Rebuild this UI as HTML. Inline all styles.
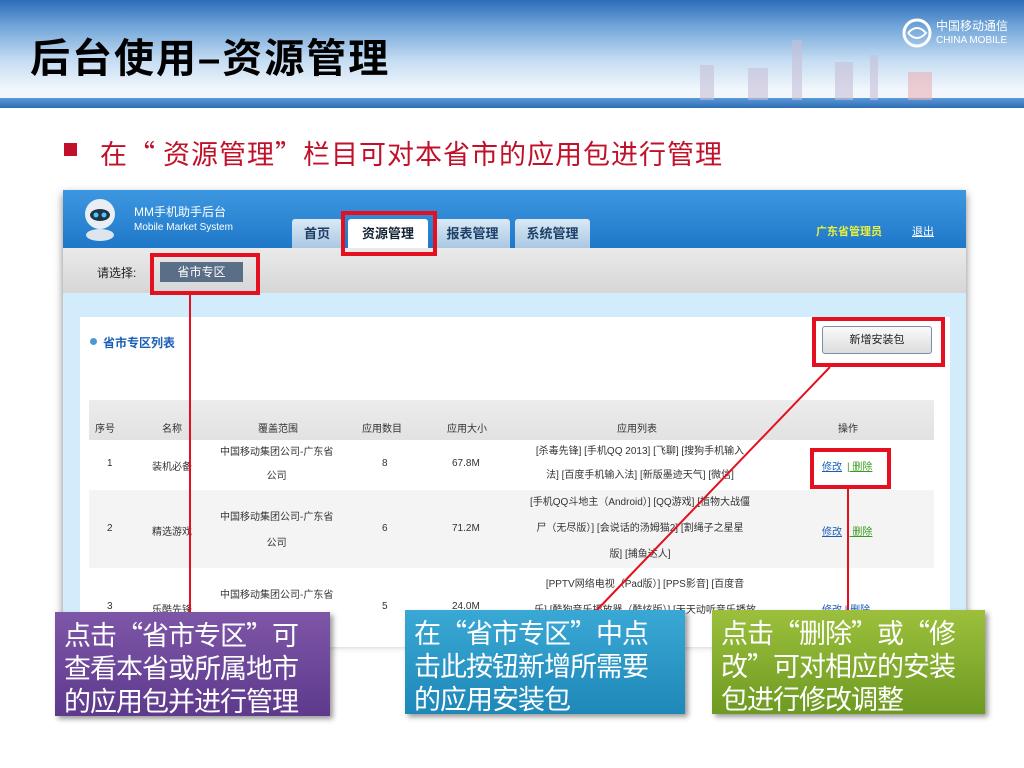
<!DOCTYPE html>
<html><head><meta charset="utf-8"><style>
*{margin:0;padding:0;box-sizing:border-box}
body{width:1024px;height:768px;position:relative;overflow:hidden;background:#fff;font-family:"Liberation Sans","Noto Sans CJK SC",sans-serif}
.a{position:absolute}
.hdr{left:0;top:0;width:1024px;height:100px;background:linear-gradient(180deg,#2d6cb8 0%,#6ea3d8 25%,#c4dcf2 60%,#f2f7fc 90%)}
.band{left:0;top:98px;width:1024px;height:10px;background:linear-gradient(180deg,#5a9ad6,#2f6db5);}
.title{left:30px;top:26px;font-size:40px;font-weight:bold;color:#000;letter-spacing:2px}
.sub{left:100px;top:133px;font-size:27px;color:#c0102a;letter-spacing:1px;font-family:"Noto Sans CJK SC",sans-serif}
.bul{left:64px;top:143px;width:13px;height:13px;background:#c0102a}
.shot{left:63px;top:190px;width:903px;height:450px;background:#fff;box-shadow:0 4px 8px rgba(0,0,0,.5)}
.sb{left:63px;top:190px;width:903px;height:58px;background:linear-gradient(180deg,#3d97e0,#1f78c8)}
.gb{left:63px;top:248px;width:903px;height:45px;background:linear-gradient(180deg,#eaeaea,#d6d6d6)}
.lb{left:63px;top:293px;width:903px;height:350px;background:#d3ecfb}
.wp{left:80px;top:317px;width:870px;height:330px;background:#fff}
.tab{top:219px;height:29px;background:linear-gradient(180deg,#dbe9f5,#a9c8e2);border-radius:3px 3px 0 0;font-size:13px;font-weight:bold;color:#1d3f66;text-align:center;line-height:29px}
.t{font-size:10px;color:#333;position:absolute;text-align:center}
.rb{position:absolute;border:4px solid #e4101f}
.box{position:absolute;color:#fff;font-size:27px;line-height:33px;padding:5px 9px;box-shadow:3px 3px 5px rgba(0,0,0,.4);white-space:nowrap;font-family:"Noto Sans CJK SC",sans-serif;letter-spacing:-1px}
</style></head><body>
<div class="a hdr"></div>
<div class="a band"></div>
<svg class="a" style="left:690px;top:20px" width="334" height="80">
<g fill="#c8c0d8" opacity=".6"><rect x="10" y="45" width="14" height="35"/><rect x="58" y="48" width="20" height="32"/><rect x="102" y="20" width="10" height="60"/><rect x="145" y="42" width="18" height="38"/><rect x="180" y="35" width="8" height="45"/><rect x="218" y="52" width="24" height="28" fill="#e8b0b8"/></g>
</svg>
<svg class="a" style="left:902px;top:18px" width="30" height="30"><circle cx="15" cy="15" r="13" fill="none" stroke="#fff" stroke-width="3"/><path d="M6 15 Q15 5 24 15 Q15 25 6 15" fill="none" stroke="#fff" stroke-width="2"/></svg>
<div class="a" style="left:936px;top:20px;font-size:12px;color:#fff;line-height:13px">中国移动通信<br><span style="font-size:10px">CHINA MOBILE</span></div>
<div class="a title">后台使用–资源管理</div>
<div class="a bul"></div>
<div class="a sub">在“ 资源管理”栏目可对本省市的应用包进行管理</div>

<div class="a shot"></div>
<div class="a sb"></div>
<div class="a gb"></div>
<div class="a lb"></div>
<div class="a wp"></div>
<svg class="a" style="left:74px;top:192px" width="50" height="50"><circle cx="26" cy="22" r="15" fill="#e8eef4"/><ellipse cx="26" cy="23" rx="10" ry="6" fill="#234"/><circle cx="22" cy="23" r="2.5" fill="#4cf"/><circle cx="30" cy="23" r="2.5" fill="#4cf"/><ellipse cx="26" cy="43" rx="14" ry="6" fill="#dde6ee"/></svg>
<div class="a" style="left:134px;top:203px;font-size:12px;color:#fff">MM手机助手后台</div>
<div class="a" style="left:134px;top:222px;font-size:10px;color:#fff">Mobile Market System</div>
<div class="a tab" style="left:292px;width:50px">首页</div>
<div class="a tab" style="left:348px;width:80px;background:#fff;color:#123">资源管理</div>
<div class="a tab" style="left:435px;width:75px">报表管理</div>
<div class="a tab" style="left:515px;width:75px">系统管理</div>
<div class="a" style="left:816px;top:223px;font-size:11px;font-weight:bold;color:#e8f040">广东省管理员</div>
<div class="a" style="left:912px;top:223px;font-size:11px;color:#fff;text-decoration:underline">退出</div>
<div class="a" style="left:97px;top:264px;font-size:12px;color:#222">请选择:</div>
<div class="a" style="left:160px;top:262px;width:83px;height:20px;background:#5a6e88;color:#fff;font-size:12px;text-align:center;line-height:20px">省市专区</div>
<div class="a" style="left:90px;top:338px;width:7px;height:7px;border-radius:50%;background:#4a9ad8"></div>
<div class="a" style="left:103px;top:334px;font-size:12px;font-weight:bold;color:#1b5eb8">省市专区列表</div>
<div class="a" style="left:822px;top:326px;width:110px;height:28px;border:1px solid #7890a8;border-radius:3px;background:linear-gradient(180deg,#fafafa,#dcdcdc);font-size:11px;text-align:center;line-height:26px;color:#222">新增安装包</div>
<div class="a" style="left:89px;top:400px;width:845px;height:40px;background:linear-gradient(180deg,#ececec,#e2e2e2)"></div>
<div class="a" style="left:89px;top:490px;width:845px;height:78px;background:#f4f4f4"></div>
<div class="t" style="left:95px;top:420px">序号</div><div class="t" style="left:162px;top:420px">名称</div><div class="t" style="left:258px;top:420px">覆盖范围</div><div class="t" style="left:362px;top:420px">应用数目</div><div class="t" style="left:447px;top:420px">应用大小</div><div class="t" style="left:617px;top:420px">应用列表</div><div class="t" style="left:838px;top:420px">操作</div>
<div class="t" style="left:107px;top:458px">1</div><div class="t" style="left:152px;top:458px">装机必备</div><div class="t" style="left:220px;top:441px;line-height:24px">中国移动集团公司-广东省<br>公司</div><div class="t" style="left:382px;top:458px">8</div><div class="t" style="left:452px;top:458px">67.8M</div><div class="t" style="left:520px;top:440px;width:240px;line-height:24px">[杀毒先锋] [手机QQ 2013] [飞聊] [搜狗手机输入<br>法] [百度手机输入法] [新版墨迹天气] [微信]</div>
<div class="t" style="left:822px;top:458px;color:#1b5eb8;text-decoration:underline">修改</div><div class="t" style="left:847px;top:458px;color:#3a9a20;text-decoration:underline">| 删除</div>
<div class="t" style="left:107px;top:523px">2</div><div class="t" style="left:152px;top:523px">精选游戏</div><div class="t" style="left:220px;top:505px;line-height:26px">中国移动集团公司-广东省<br>公司</div><div class="t" style="left:382px;top:523px">6</div><div class="t" style="left:452px;top:523px">71.2M</div><div class="t" style="left:515px;top:490px;width:250px;line-height:26px">[手机QQ斗地主（Android）] [QQ游戏] [植物大战僵<br>尸（无尽版）] [会说话的汤姆猫2] [割绳子之星星<br>版] [捕鱼达人]</div>
<div class="t" style="left:822px;top:523px;color:#1b5eb8;text-decoration:underline">修改</div><div class="t" style="left:847px;top:523px;color:#3a9a20;text-decoration:underline">| 删除</div>
<div class="t" style="left:107px;top:601px">3</div><div class="t" style="left:152px;top:601px">乐酷先锋</div><div class="t" style="left:220px;top:586px">中国移动集团公司-广东省</div><div class="t" style="left:382px;top:601px">5</div><div class="t" style="left:452px;top:601px">24.0M</div><div class="t" style="left:520px;top:572px;width:250px;line-height:26px">[PPTV网络电视（Pad版）] [PPS影音] [百度音<br>乐] [酷狗音乐播放器（酷炫版）] [天天动听音乐播放</div>
<div class="t" style="left:822px;top:601px;color:#1b5eb8">修改 | 删除</div>

<div class="rb" style="left:341px;top:211px;width:96px;height:45px"></div>
<div class="rb" style="left:150px;top:253px;width:110px;height:42px"></div>
<div class="rb" style="left:812px;top:317px;width:133px;height:50px"></div>
<div class="rb" style="left:810px;top:448px;width:81px;height:41px"></div>
<svg class="a" style="left:0;top:0" width="1024" height="768"><g stroke="#e4101f" stroke-width="2"><line x1="190" y1="294" x2="190" y2="612"/><line x1="830" y1="367" x2="595" y2="612"/><line x1="848" y1="488" x2="848" y2="612"/></g></svg>

<div class="box" style="left:55px;top:612px;width:275px;height:104px;background:linear-gradient(180deg,#7e56a8,#5e3a8c)">点击“省市专区”可<br>查看本省或所属地市<br>的应用包并进行管理</div>
<div class="box" style="left:405px;top:610px;width:280px;height:104px;background:linear-gradient(180deg,#3aa8d4,#1e88b8)">在“省市专区”中点<br>击此按钮新增所需要<br>的应用安装包</div>
<div class="box" style="left:712px;top:610px;width:273px;height:104px;background:linear-gradient(180deg,#9cc03c,#6e9a22)">点击“删除”或“修<br>改”可对相应的安装<br>包进行修改调整</div>
</body></html>
